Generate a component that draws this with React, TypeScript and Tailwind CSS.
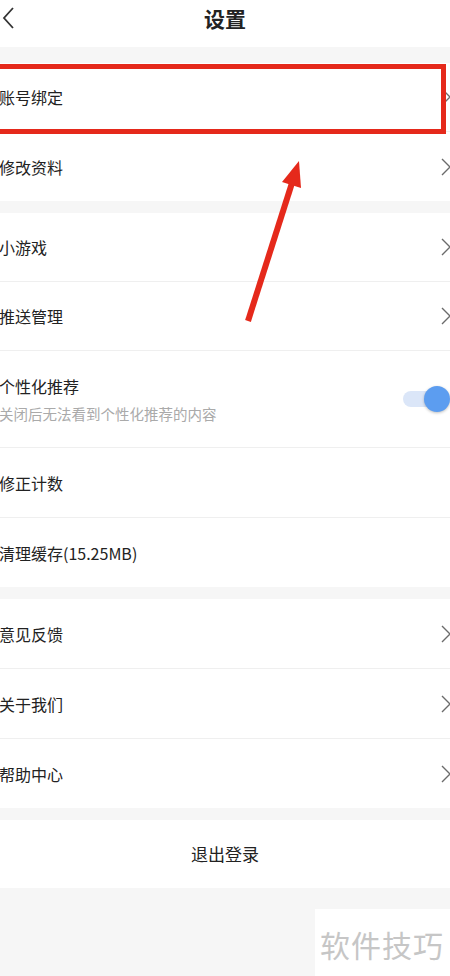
import React from "react";

const font = { fontFamily: '"Noto Sans CJK SC", "Noto Sans", sans-serif' };

function Chevron() {
  return (
    <svg width="10" height="18" viewBox="0 0 10 18" className="shrink-0">
      <polyline points="1,1 9,9 1,17" fill="none" stroke="#6b6b6b" strokeWidth="1.4" />
    </svg>
  );
}

function Row({ label, chevron = true, last = false, h = "h-[69px]" }: { label: string; chevron?: boolean; last?: boolean; h?: string }) {
  return (
    <div className={`${h} bg-white flex items-center justify-between ${last ? "" : "border-b border-[#efefef]"}`}>
      <span className="ml-[-1px] text-[16px] text-[#222]">{label}</span>
      {chevron && <div className="mr-[-1px]"><Chevron /></div>}
    </div>
  );
}

export default function App() {
  return (
    <div className="relative w-[450px] h-[976px] overflow-hidden bg-[#f6f6f6]" style={font}>
      {/* header */}
      <div className="h-[47px] bg-white flex items-center justify-center relative">
        <svg width="14" height="22" viewBox="0 0 14 22" className="absolute left-[2px] top-[7px]">
          <polyline points="11,1 2,11 11,21" fill="none" stroke="#333" strokeWidth="1.8" />
        </svg>
        <span className="text-[21px] font-bold text-[#222] mt-[-9px]">设置</span>
      </div>

      <div className="h-[16px]" />
      <div>
        <Row label="账号绑定" />
        <Row label="修改资料" last />
      </div>

      <div className="h-[12px]" />
      <div>
        <Row label="小游戏" />
        <Row label="推送管理" />
        <div className="h-[97px] bg-white flex items-center justify-between border-b border-[#efefef]">
          <div className="ml-[-1px] flex flex-col">
            <span className="text-[16px] text-[#222] leading-[22px]">个性化推荐</span>
            <span className="text-[14.5px] text-[#aaa] leading-[20px] mt-[7px]">关闭后无法看到个性化推荐的内容</span>
          </div>
          <div className="relative w-[44px] h-[26px] mr-[1px]">
            <div className="absolute left-[-2px] top-[5px] w-[34px] h-[16px] rounded-full bg-[#dbe6f8]" />
            <div className="absolute right-[-1px] top-0 w-[26px] h-[26px] rounded-full bg-[#5c9df0] shadow-[0_1px_3px_rgba(0,0,0,0.25)]" />
          </div>
        </div>
        <Row label="修正计数" chevron={false} h="h-[70px]" />
        <Row label="清理缓存(15.25MB)" chevron={false} last />
      </div>

      <div className="h-[12px]" />
      <div>
        <Row label="意见反馈" h="h-[70px]" />
        <Row label="关于我们" h="h-[70px]" />
        <Row label="帮助中心" last />
      </div>

      <div className="h-[12px]" />
      <div className="h-[68px] bg-white flex items-center justify-center">
        <span className="text-[17px] text-[#222]">退出登录</span>
      </div>

      {/* watermark */}
      <div className="absolute left-[315px] top-[909px] w-[140px] h-[70px] bg-white flex items-center pl-[5px]">
        <span className="text-[30px] text-[#c6c6c6] tracking-[1px]">软件技巧</span>
      </div>

      {/* annotation: red box */}
      <div className="absolute left-[-10px] top-[64px] w-[456px] h-[70px] border-[5px] border-[#e5291b]" />

      {/* annotation: arrow */}
      <svg className="absolute left-0 top-0 pointer-events-none" width="450" height="976">
        <line x1="248" y1="321" x2="292" y2="183" stroke="#e5291b" strokeWidth="6" strokeLinecap="butt" />
        <polygon points="299,161 301,188 282,182" fill="#e5291b" />
      </svg>
    </div>
  );
}
